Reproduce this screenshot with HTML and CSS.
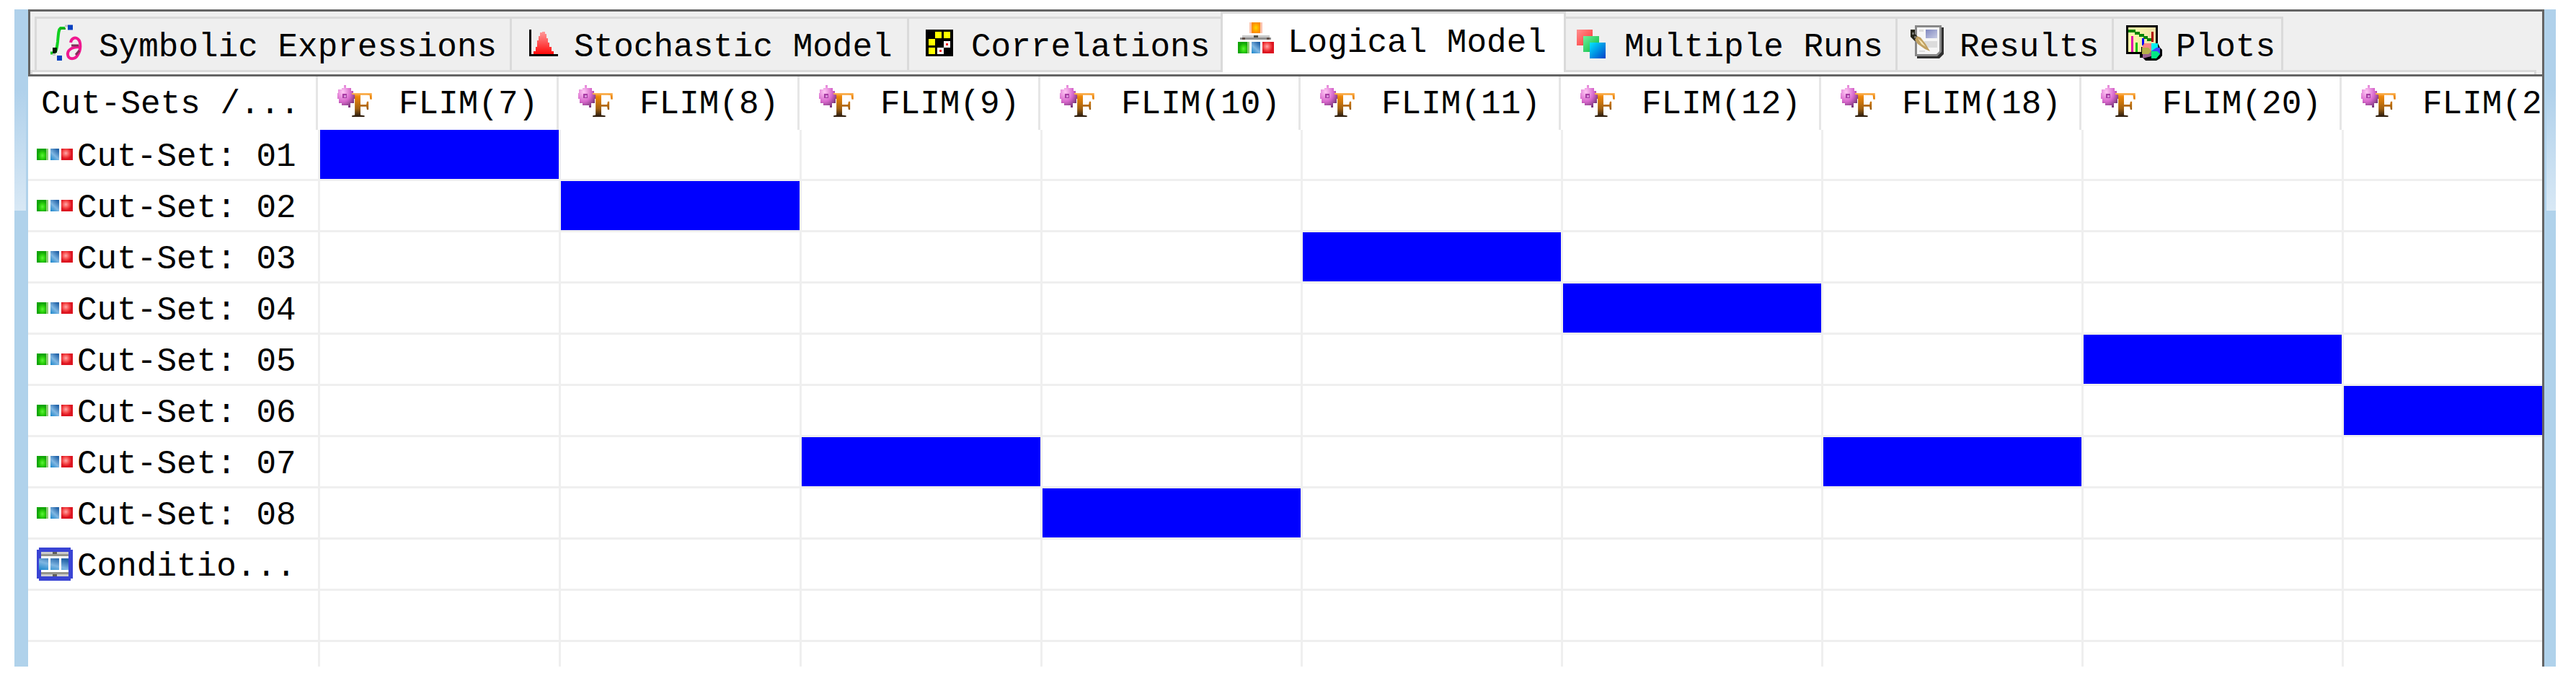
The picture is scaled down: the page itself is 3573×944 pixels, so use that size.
FILE: index.html
```html
<!DOCTYPE html>
<html lang="en">
<head>
<meta charset="utf-8">
<title>Logical Model</title>
<link rel="stylesheet" href="styles.css">
</head>
<body>
<svg class="defs" aria-hidden="true">
  <defs>
    <radialGradient id="g-green" cx="0.6" cy="0.6"><stop offset="0" stop-color="#5cf23c"/><stop offset="0.5" stop-color="#2ed60c"/><stop offset="1" stop-color="#12a508"/></radialGradient>
    <linearGradient id="g-blue" x1="0" y1="1" x2="0.7" y2="0"><stop offset="0" stop-color="#1a86cc"/><stop offset="0.5" stop-color="#7fb6e2"/><stop offset="1" stop-color="#2464a8"/></linearGradient>
    <radialGradient id="g-red" cx="0.4" cy="0.4"><stop offset="0" stop-color="#ffa8a8"/><stop offset="0.6" stop-color="#f54848"/><stop offset="1" stop-color="#dc1420"/></radialGradient>
    <radialGradient id="g-orange"><stop offset="0" stop-color="#ffd800"/><stop offset="1" stop-color="#fb8a00"/></radialGradient>
    <linearGradient id="g-peak" x1="0" y1="0" x2="0" y2="1"><stop offset="0" stop-color="#ff9a9a"/><stop offset="1" stop-color="#ff0808"/></linearGradient>
    <linearGradient id="g-run1" x1="0" y1="0" x2="1" y2="1"><stop offset="0" stop-color="#ff9090"/><stop offset="1" stop-color="#ff3030"/></linearGradient>
    <linearGradient id="g-run2" x1="0" y1="0" x2="1" y2="1"><stop offset="0" stop-color="#70f0a0"/><stop offset="1" stop-color="#00b838"/></linearGradient>
    <linearGradient id="g-run3" x1="0" y1="0" x2="1" y2="1"><stop offset="0" stop-color="#00e8ff"/><stop offset="1" stop-color="#0040c8"/></linearGradient>
    <linearGradient id="g-thumb" x1="0" y1="0" x2="1" y2="1"><stop offset="0" stop-color="#8088c0"/><stop offset="1" stop-color="#c8cce4"/></linearGradient>
    <linearGradient id="g-paper"><stop offset="0" stop-color="#fffca8"/><stop offset="1" stop-color="#ece0a8"/></linearGradient>
    <linearGradient id="g-letter" x1="0" y1="0" x2="0" y2="1"><stop offset="0.2" stop-color="#ffc070"/><stop offset="0.3" stop-color="#f08808"/><stop offset="0.6" stop-color="#a06010"/><stop offset="0.78" stop-color="#302010"/></linearGradient>
    <radialGradient id="g-flower" cx="0.3" cy="0.3" r="0.8"><stop offset="0" stop-color="#ffc8f4"/><stop offset="0.55" stop-color="#d868cc"/><stop offset="1" stop-color="#6c3070"/></radialGradient>
  </defs>

  <symbol id="i-symbolic" viewBox="0 0 50 50">
    <path d="M2 39.500H7C10 38 11 32 12 24C13 13 13 7 16 5H22" fill="none" stroke="#10d020" stroke-width="4"/>
    <path d="M15 4.500H23V7H15z" fill="#18a818"/>
    <path d="M5 32h6v7H5zM5 39h4v4H5z" fill="#001c00"/>
    <path d="M5 40h4v3H5z" fill="#c8c8c8"/>
    <path d="M22 0.500h4v3h-4z" fill="#c4c4c4"/>
    <path d="M26 0.500h7v7h-7zM11 43h7v7h-7z" fill="#0840c0"/>
    <path d="M30 25C31 19 36 17 40 20C45 24 44 36 40 42C36 49 27 49 26 42C25 36 31 31 42 31" fill="none" stroke="#f01890" stroke-width="4"/>
    <path d="M31 29H41M37 42L42 36" stroke="#803058" stroke-width="3"/>
  </symbol>

  <symbol id="i-stochastic" viewBox="0 0 50 50">
    <path d="M25 10h4v3h2v6h2v6h2v6h3v6h3v4H13v-4h3v-6h2v-9h2v-6h2v-5h3z" fill="url(#g-peak)"/>
    <path d="M7 7h3v34h37v3H7z" fill="#000"/>
  </symbol>

  <symbol id="i-correlations" viewBox="0 0 50 50">
    <path d="M6 7h38v37H6z" fill="#000"/>
    <path d="M19 10h9v9h-9zM31 10h9v9h-9zM10 20h9v9h-9zM10 32h9v9h-9z" fill="#ff0"/>
    <path d="M31 23h9v9h-9zM22 32h9v9h-9z" fill="#fff"/>
    <path d="M34 26h3v3h-3zM25 35h3v3h-3z" fill="#f02020"/>
  </symbol>

  <symbol id="i-logical" viewBox="0 0 50 50">
    <path d="M16 2h18v15H16z" fill="#fbc4b0"/>
    <path d="M19 2h12v15H19z" fill="url(#g-orange)"/>
    <path d="M6 20h38v3H6z" fill="#c8c8c8"/>
    <path d="M3 23h43v3H3z" fill="#909090"/>
    <path d="M22 20h6v3h-6z" fill="#505048"/>
    <path d="M6 23h4v3H6zM40 23h4v3h-4z" fill="#605048"/>
    <path d="M0 29h16v16H0z" fill="#8ccc74"/>
    <path d="M0 29h13v16H0z" fill="url(#g-green)"/>
    <path d="M19 29h12v16H19z" fill="url(#g-blue)"/>
    <path d="M34 29h16v16H34z" fill="url(#g-red)"/>
  </symbol>

  <symbol id="i-runs" viewBox="0 0 50 50">
    <path d="M3 7h22v22H3z" fill="url(#g-run1)"/>
    <path d="M12 16h22v22H12z" fill="url(#g-run2)"/>
    <path d="M21 25h22v22H21z" fill="url(#g-run3)"/>
  </symbol>

  <symbol id="i-results" viewBox="0 0 50 50">
    <path d="M10 4h37v37l-6 6H10z" fill="#303030"/>
    <path d="M7 1h37v37l-6 6H7z" fill="#888"/>
    <path d="M10 4h31v33l-4 4H10z" fill="#f6f6f6"/>
    <path d="M13 7h6v3h-6zM20 23h18v9H20zM13 36h8v2h-8z" fill="#dcdcdc"/>
    <path d="M22 7h16v12H22z" fill="url(#g-thumb)"/>
    <path d="M1 7h6v6l4 4v4l-4 2-6-6z" fill="#242418"/>
    <path d="M3 11h3v3H3zM6 16h3v3H6z" fill="#74746c"/>
    <path d="M7 21l3-5 5 2 7 9 6 10-7-3-10-7z" fill="#c0a060"/>
    <path d="M11 19l6 5 5 7-6-4z" fill="#f4e4b4"/>
  </symbol>

  <symbol id="i-plots" viewBox="0 0 50 50">
    <path d="M0 1h44v40H0z" fill="#000"/>
    <path d="M3 4h38v34H3z" fill="url(#g-paper)"/>
    <path d="M3 7h10v3h6v3h6v3h5v3h6v4h-7v-3h-5v-3h-6v-3h-6v-3H3z" fill="#008400"/>
    <path d="M35 10h3v14h-3z" fill="#b00000"/>
    <path d="M7 16h3v22H7z" fill="#e000b0"/>
    <path d="M13 25h3v13h-3z" fill="#00c000"/>
    <path d="M22 19h3v10h-3z" fill="#0000ff"/>
    <path d="M25 26h19l3 6 3 3v8l-3 4-5 3H27l-4-4h-4v-5h2V31h2z" fill="#000"/>
    <path d="M35 37L22 32l3-6h10z" fill="#ff8484"/>
    <path d="M35 37V26h9v9z" fill="#00f0f0"/>
    <path d="M35 37l7-5h5v9h-5z" fill="#3c4cff"/>
    <path d="M35 37h8l4 4-5 6h-7z" fill="#00e884"/>
    <path d="M35 37v7l-12 3v-6z" fill="#986090"/>
    <path d="M22 32h9l4 5-4 4h-9z" fill="#b4b048"/>
  </symbol>

  <symbol id="i-flim" viewBox="0 0 50 50">
    <path d="M9 0h3v4h7v4h3v3h3v8h-2v6h-5v6h-3v-3H6v-3H2v-6H0v-8h1V6h5V4h3z" fill="url(#g-flower)"/>
    <path d="M7 12h6v6H7z" fill="#a83ca4"/>
    <path d="M9 14h3v3H9z" fill="#d890d8"/>
    <text class="letter" x="19" y="44">F</text>
  </symbol>

  <symbol id="i-cutset" viewBox="0 0 50 50">
    <path d="M0 17h16v16H0z" fill="#8ccc74"/>
    <path d="M0 17h13v16H0z" fill="url(#g-green)"/>
    <path d="M19 17h12v16H19z" fill="url(#g-blue)"/>
    <path d="M34 17h16v16H34z" fill="url(#g-red)"/>
  </symbol>

  <symbol id="i-condition" viewBox="0 0 50 50">
    <path d="M3 2h44v3h3v40h-3v3H3v-3H0V5h3z" fill="#3a44d4"/>
    <path d="M6 8h38v34H6z" fill="#fff"/>
    <path d="M6 8h38v3H6zM6 39h38v3H6z" fill="#ccc"/>
    <path d="M6 11h38v3H6zM6 36h38v3H6z" fill="#94948c"/>
    <path d="M22 8h6v3h-6zM22 39h6v3h-6z" fill="#60605c"/>
    <path d="M3 17h13v16H3zM19 17h12v16H19zM34 17h10v16H34z" fill="url(#g-blue)"/>
  </symbol>
</svg>

<main class="window">
  <nav class="strip">
    <div class="tabs" role="tablist">
      <button class="tab tab-symbolic" role="tab"><svg class="icon"><use href="#i-symbolic"/></svg><span>Symbolic Expressions</span></button>
      <button class="tab tab-stochastic" role="tab"><svg class="icon"><use href="#i-stochastic"/></svg><span>Stochastic Model</span></button>
      <button class="tab tab-correlations" role="tab"><svg class="icon"><use href="#i-correlations"/></svg><span>Correlations</span></button>
      <button class="tab tab-logical active" role="tab" aria-selected="true"><svg class="icon"><use href="#i-logical"/></svg><span>Logical Model</span></button>
      <button class="tab tab-runs" role="tab"><svg class="icon"><use href="#i-runs"/></svg><span>Multiple Runs</span></button>
      <button class="tab tab-results" role="tab"><svg class="icon"><use href="#i-results"/></svg><span>Results</span></button>
      <button class="tab tab-plots" role="tab"><svg class="icon"><use href="#i-plots"/></svg><span>Plots</span></button>
    </div>
    <div class="pane-edge"></div>
  </nav>

  <table class="grid">
    <colgroup>
      <col class="c-name"><col class="c-short"><col class="c-short"><col class="c-short"><col class="c-long"><col class="c-long"><col class="c-long"><col class="c-long"><col class="c-long"><col>
    </colgroup>
    <thead>
      <tr>
        <th scope="col"><div class="head head-name">Cut-Sets /...</div></th>
        <th scope="col"><div class="head"><svg class="icon"><use href="#i-flim"/></svg><span>FLIM(7)</span></div></th>
        <th scope="col"><div class="head"><svg class="icon"><use href="#i-flim"/></svg><span>FLIM(8)</span></div></th>
        <th scope="col"><div class="head"><svg class="icon"><use href="#i-flim"/></svg><span>FLIM(9)</span></div></th>
        <th scope="col"><div class="head"><svg class="icon"><use href="#i-flim"/></svg><span>FLIM(10)</span></div></th>
        <th scope="col"><div class="head"><svg class="icon"><use href="#i-flim"/></svg><span>FLIM(11)</span></div></th>
        <th scope="col"><div class="head"><svg class="icon"><use href="#i-flim"/></svg><span>FLIM(12)</span></div></th>
        <th scope="col"><div class="head"><svg class="icon"><use href="#i-flim"/></svg><span>FLIM(18)</span></div></th>
        <th scope="col"><div class="head"><svg class="icon"><use href="#i-flim"/></svg><span>FLIM(20)</span></div></th>
        <th scope="col"><div class="head"><svg class="icon"><use href="#i-flim"/></svg><span>FLIM(2</span></div></th>
      </tr>
    </thead>
    <tbody>
      <tr><th scope="row"><div class="name"><svg class="icon"><use href="#i-cutset"/></svg><span>Cut-Set: 01</span></div></th><td class="on"></td><td></td><td></td><td></td><td></td><td></td><td></td><td></td><td></td></tr>
      <tr><th scope="row"><div class="name"><svg class="icon"><use href="#i-cutset"/></svg><span>Cut-Set: 02</span></div></th><td></td><td class="on"></td><td></td><td></td><td></td><td></td><td></td><td></td><td></td></tr>
      <tr><th scope="row"><div class="name"><svg class="icon"><use href="#i-cutset"/></svg><span>Cut-Set: 03</span></div></th><td></td><td></td><td></td><td></td><td class="on"></td><td></td><td></td><td></td><td></td></tr>
      <tr><th scope="row"><div class="name"><svg class="icon"><use href="#i-cutset"/></svg><span>Cut-Set: 04</span></div></th><td></td><td></td><td></td><td></td><td></td><td class="on"></td><td></td><td></td><td></td></tr>
      <tr><th scope="row"><div class="name"><svg class="icon"><use href="#i-cutset"/></svg><span>Cut-Set: 05</span></div></th><td></td><td></td><td></td><td></td><td></td><td></td><td></td><td class="on"></td><td></td></tr>
      <tr><th scope="row"><div class="name"><svg class="icon"><use href="#i-cutset"/></svg><span>Cut-Set: 06</span></div></th><td></td><td></td><td></td><td></td><td></td><td></td><td></td><td></td><td class="on"></td></tr>
      <tr><th scope="row"><div class="name"><svg class="icon"><use href="#i-cutset"/></svg><span>Cut-Set: 07</span></div></th><td></td><td></td><td class="on"></td><td></td><td></td><td></td><td class="on"></td><td></td><td></td></tr>
      <tr><th scope="row"><div class="name"><svg class="icon"><use href="#i-cutset"/></svg><span>Cut-Set: 08</span></div></th><td></td><td></td><td></td><td class="on"></td><td></td><td></td><td></td><td></td><td></td></tr>
      <tr><th scope="row"><div class="name"><svg class="icon"><use href="#i-condition"/></svg><span>Conditio...</span></div></th><td></td><td></td><td></td><td></td><td></td><td></td><td></td><td></td><td></td></tr>
      <tr><td></td><td></td><td></td><td></td><td></td><td></td><td></td><td></td><td></td><td></td></tr>
      <tr class="cut"><td></td><td></td><td></td><td></td><td></td><td></td><td></td><td></td><td></td><td></td></tr>
    </tbody>
  </table>
</main>
</body>
</html>
```

FILE: styles.css
```css
* {
  box-sizing: border-box;
}

body {
  margin: 0;
  padding: 13px 28px 18px 20px;
  background: #fff;
  color: #000;
  font: 46px/60px "Liberation Mono", "Courier New", monospace;
}

.defs {
  position: absolute;
  width: 0;
  height: 0;
}

.letter {
  font: bold 51px "Liberation Serif", serif;
  fill: url(#g-letter);
}

.icon {
  flex: none;
  width: 50px;
  height: 50px;
  overflow: visible;
}

/* Glass window frame: solid blue with a sheen over the upper part of each side */
.window {
  padding: 0 16px 0 19px;
  background:
    linear-gradient(#b0d1eb 40%, #d8e8f5) left top / 16px 279px no-repeat,
    linear-gradient(#b0d1eb 40%, #d8e8f5) right top / 13px 279px no-repeat,
    #b0d2eb;
}

/* Tab strip */
.strip {
  padding-top: 3px;
  background: #efefef;
  border: 3px solid #646464;
}

.tabs {
  display: flex;
  align-items: flex-end;
  height: 78px;
  padding-left: 6px;
}

.tab {
  display: flex;
  align-items: center;
  gap: 19px;
  height: 74px;
  margin: 0;
  padding: 0 0 0 17px;
  overflow: hidden;
  border: 0 solid #dadada;
  border-width: 3px 0 0 3px;
  background: #efefef;
  color: inherit;
  font: inherit;
  white-space: nowrap;
}

.tab .icon {
  margin-bottom: 6px;
}

.tab span {
  padding-top: 8px;
}

.tab-symbolic { width: 659px; }
.tab-stochastic { width: 551px; }
.tab-correlations { width: 435px; }
.tab-logical { width: 479px; }
.tab-runs { width: 457px; }
.tab-results { width: 300px; }
.tab-plots { width: 238px; border-right-width: 3px; }

.tab-runs {
  padding-left: 12px;
  border-left-width: 0;
}

.tab.active {
  z-index: 1;
  height: 84px;
  margin-bottom: -3px;
  padding-left: 21px;
  border-right-width: 3px;
  background: #fff;
}

.tab.active .icon {
  margin-bottom: 12px;
}

.tab.active span {
  padding-top: 0;
}

.pane-edge {
  height: 6px;
  margin-right: 8px;
  border: 3px solid #dadada;
  border-bottom: 0;
  background: #fff;
}

/* Incidence grid */
.grid {
  width: 100%;
  table-layout: fixed;
  border-spacing: 0;
  background: #fff;
  border-right: 3px solid #646464;
}

.c-name { width: 405px; }
.c-short { width: 334px; }
.c-long { width: 361px; }

th,
td {
  height: 71px;
  padding: 0;
  overflow: hidden;
  font-weight: normal;
  text-align: left;
  white-space: nowrap;
}

tbody th,
tbody td {
  border: 0 solid #efefef;
  border-width: 0 3px 3px 0;
}

tbody td:last-child {
  border-right: 0;
}

.head {
  display: flex;
  align-items: center;
  gap: 35px;
  height: 74px;
  margin-right: 3px;
  padding-left: 24px;
  border-right: 3px solid #e6e6e6;
}

.head-name {
  padding: 4px 0 0 18px;
}

.head span {
  padding-top: 4px;
}

th:last-child .head {
  margin-right: 0;
  border-right: 0;
}

.name {
  display: flex;
  align-items: center;
  gap: 6px;
  height: 68px;
  padding-left: 12px;
}

.name span {
  padding-top: 8px;
}

.on {
  background: #00f;
  background-clip: padding-box;
}

.cut td {
  height: 34px;
  border-bottom: 0;
}
```
